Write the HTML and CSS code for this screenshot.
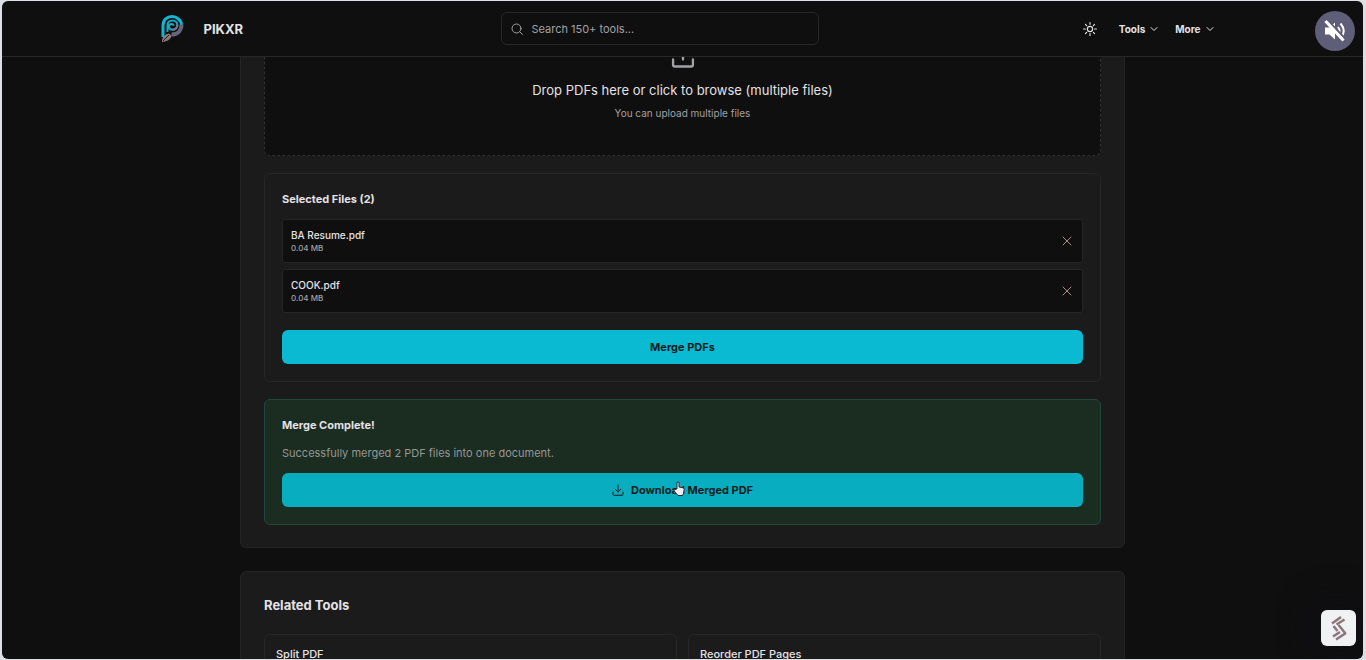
FILE: index.html
```html
<!DOCTYPE html>
<html lang="en">
<head>
  <meta charset="UTF-8">
  <meta name="viewport" content="width=device-width, initial-scale=1.0">
  <title>Merge PDF - PIKXR</title>
  <link rel="stylesheet" href="styles.css">
</head>
<body>

  <div class="window">
    <header class="header">
      <div class="header-inner">
        <a class="brand" href="#">
          <svg width="24" height="30" viewBox="0 0 24 30" fill="none">
            <path d="M3 23V11.500C3 6 7 2.500 12 2.500s9.500 4 9.500 8.500" stroke="#12b5d2" stroke-width="3"/>
            <path d="M21.500 10.500c0 6-4 10-10 10" stroke="#65647c" stroke-width="4"/>
            <path d="M7.500 18v-6.500C7.500 8.500 9.500 6.500 12.500 6.500s4.800 2 4.800 4.500-2 4.800-4.800 4.800-3.500-1.800-3.500-3.300 1.300-2.500 2.500-2.500 2 .7 2 1.700" stroke="#1fa5be" stroke-width="2"/>
            <path d="M17.300 11c0 2.800-2 4.800-5 4.800" stroke="#77738a" stroke-width="2.500"/>
            <path d="M2 28c0-4.500 2-7.500 7-8.500l2.500 2C11 25 7.500 27.500 2 28z" fill="#8a7779"/>
            <path d="M3 27l6-6" stroke="#2b2426" stroke-width="1"/>
          </svg>
          <span>PIKXR</span>
        </a>

        <label class="search">
          <svg class="icon" width="12" height="12" viewBox="0 0 24 24"><circle cx="11" cy="11" r="9"/><path d="M18 18l5 5"/></svg>
          <input type="search" aria-label="Search tools" placeholder="Search 150+ tools...">
        </label>

        <nav class="nav">
          <button class="theme" aria-label="Toggle theme">
            <svg class="icon" width="14" height="14" viewBox="0 0 24 24"><circle cx="12" cy="12" r="4.500"/><path d="M12 1v3M12 20v3M1 12h3M20 12h3M4.200 4.200l2 2M17.800 17.800l2 2M4.200 19.800l2-2M17.800 6.200l2-2"/></svg>
          </button>
          <button class="menu">Tools
            <svg class="icon" width="8" height="8" viewBox="0 0 8 8"><path d="M1 2.500l3 3 3-3"/></svg>
          </button>
          <button class="menu">More
            <svg class="icon" width="8" height="8" viewBox="0 0 8 8"><path d="M1 2.500l3 3 3-3"/></svg>
          </button>
        </nav>
      </div>
    </header>

    <main class="page">
      <div class="content">
        <section class="card">
          <button class="dropzone">
            <svg class="icon" width="28" height="28" viewBox="0 0 24 24"><path d="M3.500 15v4.500a1.500 1.500 0 0 0 1.500 1.500h14a1.500 1.500 0 0 0 1.500-1.500V15M12 15V3M7 8l5-5 5 5"/></svg>
            <span class="drop-title">Drop PDFs here or click to browse (multiple files)</span>
            <span class="drop-hint">You can upload multiple files</span>
          </button>

          <div class="panel">
            <h3>Selected Files (2)</h3>
            <ul class="files">
              <li class="file">
                <div>
                  <p class="file-name">BA Resume.pdf</p>
                  <p class="file-size">0.04 MB</p>
                </div>
                <button class="remove" aria-label="Remove BA Resume.pdf">
                  <svg class="icon" width="10" height="10" viewBox="0 0 10 10"><path d="M1 1l8 8M9 1L1 9"/></svg>
                </button>
              </li>
              <li class="file">
                <div>
                  <p class="file-name">COOK.pdf</p>
                  <p class="file-size">0.04 MB</p>
                </div>
                <button class="remove" aria-label="Remove COOK.pdf">
                  <svg class="icon" width="10" height="10" viewBox="0 0 10 10"><path d="M1 1l8 8M9 1L1 9"/></svg>
                </button>
              </li>
            </ul>
            <button class="primary">Merge PDFs</button>
          </div>

          <div class="panel success">
            <h3>Merge Complete!</h3>
            <p class="message">Successfully merged 2 PDF files into one document.</p>
            <button class="primary hovered">
              <svg class="icon" width="12" height="12" viewBox="0 0 12 12"><path d="M1 8v2.500q0 .8.800.8h8.400q.8 0 .8-.8V8M6 1v7M3.200 5.200L6 8l2.800-2.800"/></svg>
              <span>Download Merged PDF</span>
              <svg class="cursor" width="12" height="15" viewBox="0 0 12 15"><path d="M4 8V2q0-1.300 1-1.300T6 2v4l4 .8q1.300.3 1.200 1.700l-.7 4-1 2H5l-3.800-4.500q-.8-1.300.6-1.600z" fill="#f4eef4" stroke="#222b30"/></svg>
            </button>
          </div>
        </section>

        <section class="card related">
          <h2>Related Tools</h2>
          <div class="related-grid">
            <a class="tool" href="#">Split PDF</a>
            <a class="tool" href="#">Reorder PDF Pages</a>
          </div>
        </section>
      </div>
    </main>

    <button class="mute" aria-label="Unmute">
      <svg width="24" height="24" viewBox="0 0 24 24" fill="none">
        <path d="M2 8.500h4.500L12 3.500v17l-5.500-5H2z" fill="#fff"/>
        <path d="M15 8q3 4 0 8M17.500 4.500q6.500 7.500 0 15" stroke="#fff" stroke-width="2"/>
        <path d="M4.500 1l18 19" stroke="#5f5e78" stroke-width="2"/>
        <path d="M2.500 2l18 19.500" stroke="#fff" stroke-width="3"/>
      </svg>
    </button>

    <button class="widget" aria-label="Open widget">
      <svg width="16" height="26" viewBox="0 0 16 26" fill="none" stroke="#8b777b" stroke-width="2.500">
        <path d="M1 8.500L10 2M5.500 9.500L13.500 4.500M2.500 11L6.500 16M7.500 10L14.500 18.500M2 21.500L9 17M5 24.500L15 18"/>
      </svg>
    </button>
  </div>

</body>
</html>
```
FILE: styles.css
```css
* {
  box-sizing: border-box;
}
body {
  margin: 0;
  padding: 1px 3px 1px 2px;
  background-color: #dcdfe3;
  color: #e4e2e6;
  font-family: Inter, "Liberation Sans", sans-serif;
  font-size: 11px;
}
h2, h3, p, ul {
  margin: 0;
  padding: 0;
}
button, input {
  font: inherit;
  color: inherit;
}
button {
  cursor: pointer;
}
a {
  color: inherit;
  text-decoration: none;
}
.icon {
  flex: none;
  fill: none;
  stroke: currentColor;
  stroke-width: 1;
  stroke-linecap: round;
  stroke-linejoin: round;
}
.icon[viewBox="0 0 24 24"] {
  stroke-width: 2;
}
.window {
  position: relative;
  display: flex;
  flex-direction: column;
  height: calc(100vh - 2px);
  overflow: hidden;
  border-radius: 6px;
  background-color: #0f0f0f;
}

/* Header */
.header {
  flex: none;
  border-bottom: 1px solid #272727;
}
.header-inner {
  display: flex;
  align-items: center;
  justify-content: space-between;
  max-width: 1062px;
  height: 55px;
  margin: 0 auto;
}
.brand {
  display: flex;
  align-items: center;
  gap: 20px;
  padding-left: 8px;
  font-size: 13px;
  font-weight: 700;
}
.search {
  display: flex;
  align-items: center;
  gap: 8px;
  width: 318px;
  height: 33px;
  padding: 0 9px;
  border: 1px solid #272727;
  border-radius: 6px;
  color: #a3a1a5;
}
.search input {
  flex: 1;
  min-width: 0;
  padding: 0;
  border: none;
  outline: none;
  background: none;
}
.search input::placeholder {
  color: #a3a1a5;
}
.nav {
  display: flex;
  align-items: center;
  gap: 17px;
}
.nav button {
  display: flex;
  align-items: center;
  gap: 5px;
  padding: 0;
  border: none;
  background: none;
  font-size: 10px;
  font-weight: 700;
}
.nav .theme {
  padding: 5px;
}

/* Page, scrolled down to the result */
.page {
  flex: 1;
  min-height: 0;
  overflow: hidden;
}
.content {
  display: flex;
  flex-direction: column;
  gap: 23px;
  max-width: 885px;
  margin: -59px auto 0;
}
.card {
  display: flex;
  flex-direction: column;
  gap: 17px;
  padding: 23px 23px 22px;
  border: 1px solid #242424;
  border-radius: 6px;
  background-color: #1b1b1b;
}
.dropzone {
  display: flex;
  flex-direction: column;
  align-items: center;
  padding: 19px 18px 33px;
  border: 1px dashed #303030;
  border-radius: 6px;
  background-color: #0f0f0f;
}
.dropzone .icon {
  color: #a3a1a5;
}
.drop-title {
  margin-top: 10px;
  font-size: 13px;
  line-height: 20px;
}
.drop-hint {
  margin-top: 4px;
  color: #a3a1a5;
  font-size: 10px;
  line-height: 18px;
}
.panel {
  padding: 17px;
  border: 1px solid #262626;
  border-radius: 6px;
}
.panel h3 {
  font-size: 11px;
  font-weight: 700;
  line-height: 16px;
}
.files {
  display: flex;
  flex-direction: column;
  gap: 6px;
  margin: 12px 0 17px;
  list-style: none;
}
.file {
  display: flex;
  align-items: center;
  justify-content: space-between;
  height: 44px;
  padding: 0 10px 0 8px;
  border: 1px solid #262626;
  border-radius: 3px;
  background-color: #0f0f0f;
}
.file-name {
  font-size: 10px;
  font-weight: 500;
  line-height: 13px;
}
.file-size {
  color: #a3a1a5;
  font-size: 8px;
  font-weight: 500;
  line-height: 12px;
}
.remove {
  display: flex;
  padding: 0;
  border: none;
  background: none;
  color: #b08d8d;
}
.primary {
  position: relative;
  display: flex;
  align-items: center;
  justify-content: center;
  gap: 7px;
  width: 100%;
  height: 34px;
  border: none;
  border-radius: 6px;
  background-color: #0abad2;
  color: #0d1c20;
  font-weight: 700;
}
.primary.hovered {
  background-color: #08adc0;
}
.success {
  border-color: #20493b;
  background-color: #1b2c20;
}
.message {
  margin: 12px 0;
  color: #969797;
  line-height: 16px;
}
.cursor {
  position: absolute;
  top: 8px;
  left: calc(50% - 10px);
}

/* Related tools */
.related h2 {
  font-size: 13px;
  font-weight: 700;
  line-height: 20px;
}
.related-grid {
  display: grid;
  grid-template-columns: 1fr 1fr;
  gap: 11px;
  margin-top: 2px;
}
.tool {
  height: 60px;
  padding: 11px;
  border: 1px solid #262626;
  border-radius: 6px;
  font-weight: 500;
  line-height: 16px;
}

/* Floating buttons */
.mute,
.widget {
  position: absolute;
  display: flex;
  align-items: center;
  justify-content: center;
  padding: 0;
  border: none;
}
.mute {
  top: 10px;
  right: 8px;
  width: 40px;
  height: 40px;
  border-radius: 50%;
  background-color: #5f5e78;
}
.widget {
  right: 7px;
  bottom: 13px;
  width: 35px;
  height: 36px;
  border-radius: 6px;
  background-color: #f0f1f3;
  box-shadow: 0 0 36px 4px #10101a;
}
```
